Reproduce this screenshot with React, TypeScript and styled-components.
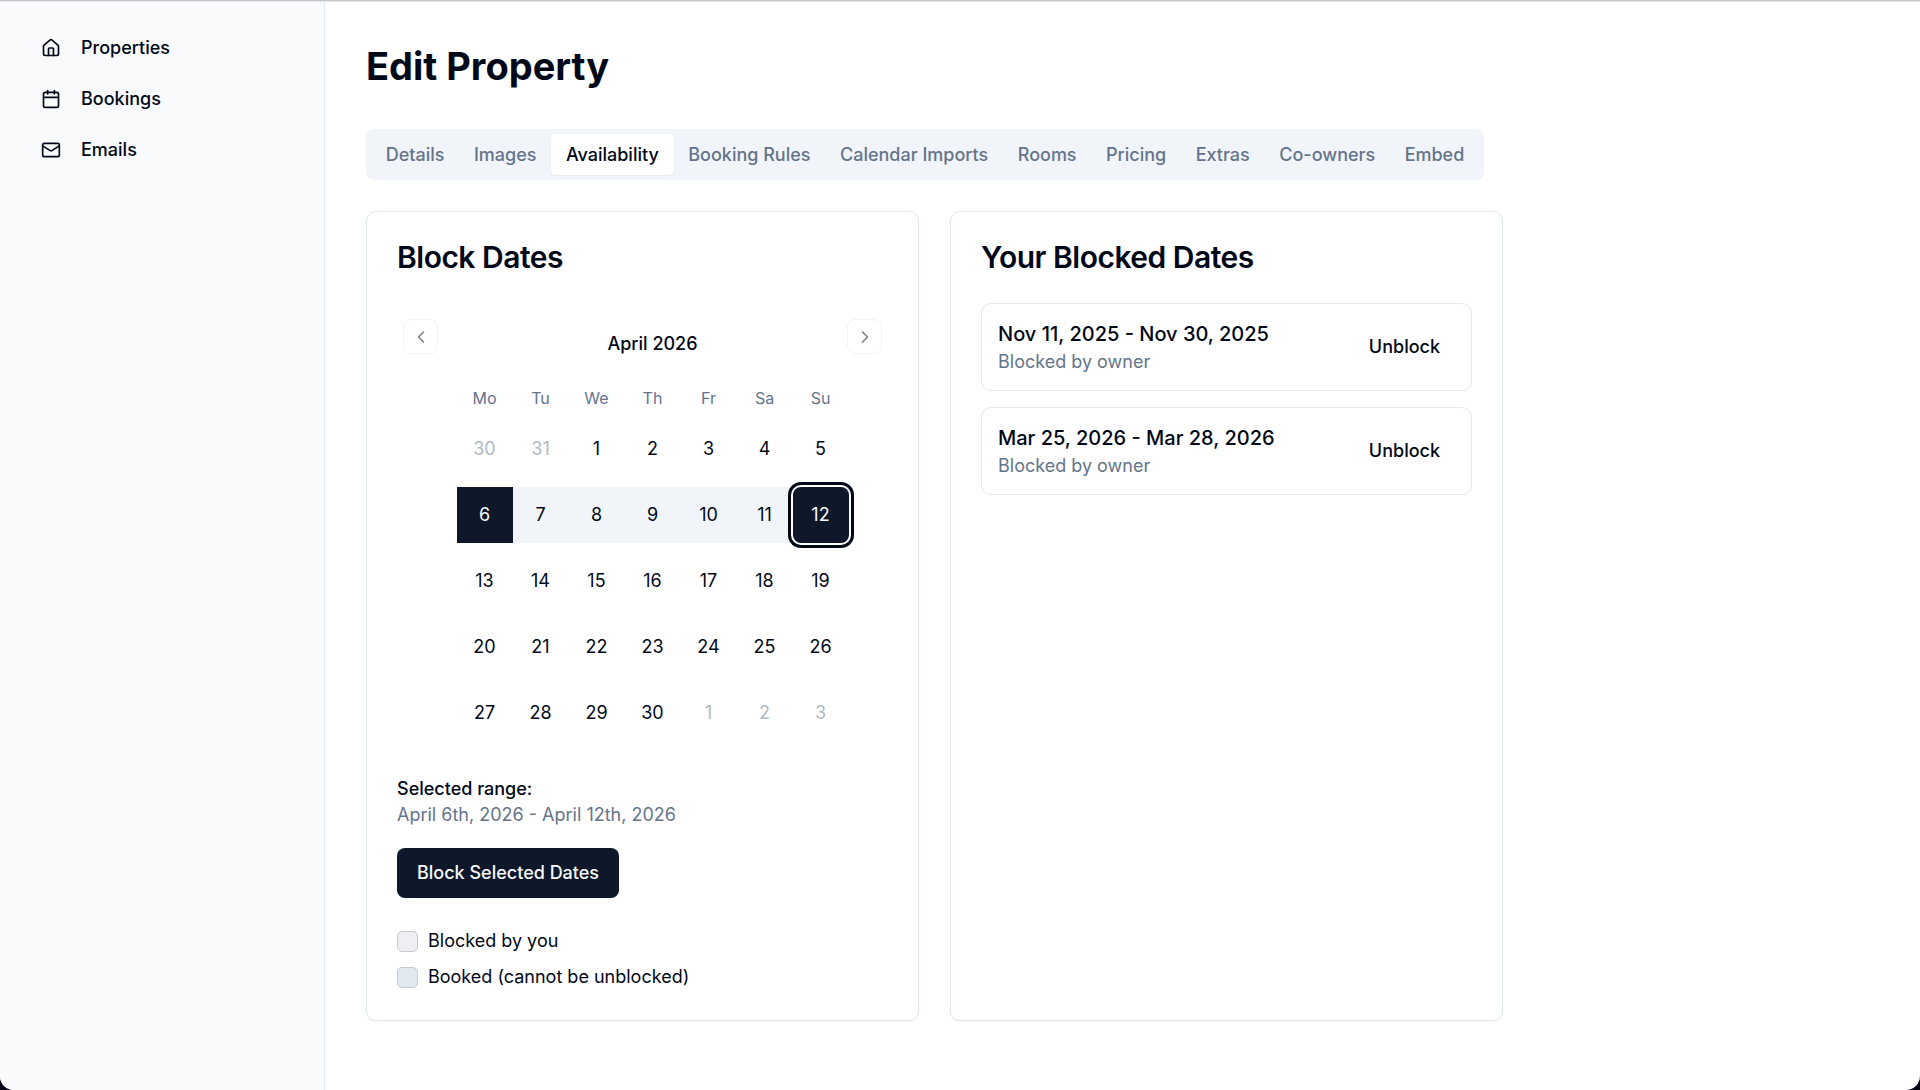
import React from "react";
import styled, { createGlobalStyle } from "styled-components";
import { Calendar, ChevronLeft, ChevronRight, House, Mail } from "lucide-react";

const color = {
  ink: "#020817",
  primary: "#0f172a",
  onPrimary: "#f8fafc",
  muted: "#64748b",
  faint: "#b1b9c5",
  line: "#e2e8f0",
  soft: "#f1f5f9",
  side: "#f8fafc",
};

const GlobalStyle = createGlobalStyle`
  *, *::before, *::after { box-sizing: border-box; }
  body {
    margin: 0;
    border-top: 1px solid #c3c7cc;
    background: #000010;
    color: ${color.ink};
    font-family: Inter, "Liberation Sans", sans-serif;
    font-size: 18px;
    line-height: 26px;
    -webkit-font-smoothing: antialiased;
  }
  button { font: inherit; color: inherit; cursor: pointer; }
  h1, h2, p, ul { margin: 0; padding: 0; }
  ul { list-style: none; }
`;

const Shell = styled.div`
  display: flex;
  min-height: calc(100vh - 1px);
  background: #fff;
  border-top: 1px solid #e4e7eb;
  border-radius: 0 0 14px 14px;
  overflow: hidden;
`;

const Sidebar = styled.aside`
  flex: 0 0 325px;
  padding: 20px;
  background: ${color.side};
  border-right: 1px solid ${color.line};
`;

const NavLink = styled.a`
  display: flex;
  align-items: center;
  gap: 20px;
  height: 51px;
  padding: 0 21px;
  color: inherit;
  font-weight: 500;
  text-decoration: none;
`;

const Main = styled.main`
  flex: 1;
  min-width: 0;
  padding: 41px;
`;

const Content = styled.div`
  max-width: 1137px;
`;

const PageTitle = styled.h1`
  margin-bottom: 40px;
  font-size: 38px;
  line-height: 46px;
  font-weight: 700;
`;

const TabList = styled.div`
  display: flex;
  max-width: 1118px;
  height: 51px;
  margin-bottom: 31px;
  padding: 5px;
  border-radius: 8px;
  background: ${color.soft};
`;

const Tab = styled.button<{ $active: boolean }>`
  flex: 1 1 auto;
  padding: 0 14px;
  border: 0;
  border-radius: 5px;
  font-weight: 500;
  white-space: nowrap;
  color: ${(p) => (p.$active ? color.ink : color.muted)};
  background: ${(p) => (p.$active ? "#fff" : "transparent")};
  box-shadow: ${(p) => (p.$active ? "0 1px 2px rgba(0, 0, 0, 0.06)" : "none")};
`;

const Cards = styled.div`
  display: grid;
  grid-template-columns: 1fr 1fr;
  gap: 31px;
`;

const Card = styled.section`
  padding: 30px;
  border: 1px solid ${color.line};
  border-radius: 10px;
  background: #fff;
  box-shadow: 0 1px 2px rgba(0, 0, 0, 0.05);
`;

const CardTitle = styled.h2`
  margin-bottom: 31px;
  font-size: 30px;
  line-height: 30px;
  font-weight: 600;
  letter-spacing: -0.5px;
`;

const CalendarBox = styled.div`
  padding: 16px 6px;
  margin-bottom: 19px;
`;

const CalendarHeader = styled.div`
  display: flex;
  justify-content: space-between;
  align-items: flex-start;
  margin-bottom: 28px;
`;

const MonthName = styled.div`
  padding: 12px 0 0 20px;
  font-weight: 500;
`;

const MonthButton = styled.button`
  display: flex;
  align-items: center;
  justify-content: center;
  width: 35px;
  height: 35px;
  padding: 0;
  border: 1px solid ${color.line};
  border-radius: 8px;
  background: transparent;
  opacity: 0.5;
`;

const MonthTable = styled.table`
  width: 392px;
  margin: 0 auto;
  border-collapse: collapse;
  table-layout: fixed;
`;

const MonthFrame = styled.div`
  padding-left: 20px;
`;

const Weekday = styled.th`
  padding: 0;
  font-size: 16px;
  font-weight: 400;
  color: ${color.muted};
`;

const DayCell = styled.td`
  padding: 10px 0 0;
`;

type DayKind = "plain" | "outside" | "edge" | "middle" | "focused";

const Day = styled.button<{ $kind: DayKind }>`
  display: block;
  width: 100%;
  height: 56px;
  padding: 0;
  border: 0;
  border-radius: ${(p) => (p.$kind === "focused" ? "8px" : "0")};
  color: ${(p) =>
    p.$kind === "outside"
      ? color.faint
      : p.$kind === "edge" || p.$kind === "focused"
        ? color.onPrimary
        : color.ink};
  background: ${(p) =>
    p.$kind === "edge" || p.$kind === "focused"
      ? color.primary
      : p.$kind === "middle"
        ? color.soft
        : "transparent"};
  box-shadow: ${(p) =>
    p.$kind === "focused" ? `0 0 0 2px #fff, 0 0 0 5px ${color.ink}` : "none"};
`;

const Strong = styled.p`
  font-weight: 500;
`;

const Muted = styled.p`
  color: ${color.muted};
`;

const PrimaryButton = styled.button`
  height: 50px;
  margin: 20px 0 30px;
  padding: 0 20px;
  border: 0;
  border-radius: 8px;
  background: ${color.primary};
  color: ${color.onPrimary};
  font-weight: 500;
`;

const Legend = styled.ul`
  display: grid;
  gap: 10px;
`;

const LegendItem = styled.li`
  display: flex;
  align-items: center;
  gap: 10px;
`;

const Swatch = styled.span<{ $fill: string }>`
  width: 21px;
  height: 21px;
  border: 1px solid #c6cad2;
  border-radius: 5px;
  background: ${(p) => p.$fill};
`;

const BlockedList = styled.ul`
  display: grid;
  gap: 16px;
`;

const BlockedItem = styled.li`
  display: flex;
  align-items: center;
  justify-content: space-between;
  padding: 15px 16px;
  border: 1px solid ${color.line};
  border-radius: 10px;
`;

const BlockedRange = styled.p`
  font-size: 20px;
  line-height: 30px;
  font-weight: 500;
`;

const GhostButton = styled.button`
  height: 46px;
  padding: 0 15px;
  border: 0;
  border-radius: 8px;
  background: transparent;
  font-weight: 500;
`;

const nav = [
  { label: "Properties", Icon: House },
  { label: "Bookings", Icon: Calendar },
  { label: "Emails", Icon: Mail },
];

const tabs = [
  "Details",
  "Images",
  "Availability",
  "Booking Rules",
  "Calendar Imports",
  "Rooms",
  "Pricing",
  "Extras",
  "Co-owners",
  "Embed",
];

const weekdays = ["Mo", "Tu", "We", "Th", "Fr", "Sa", "Su"];

const weeks = [
  [30, 31, 1, 2, 3, 4, 5],
  [6, 7, 8, 9, 10, 11, 12],
  [13, 14, 15, 16, 17, 18, 19],
  [20, 21, 22, 23, 24, 25, 26],
  [27, 28, 29, 30, 1, 2, 3],
];

const blocked = ["Nov 11, 2025 - Nov 30, 2025", "Mar 25, 2026 - Mar 28, 2026"];

function dayKind(week: number, day: number): DayKind {
  if ((week === 0 && day > 7) || (week === 4 && day < 7)) return "outside";
  if (day === 6) return "edge";
  if (day === 12) return "focused";
  return week === 1 ? "middle" : "plain";
}

export default function App() {
  return (
    <>
      <GlobalStyle />
      <Shell>
        <Sidebar>
          <nav>
            {nav.map(({ label, Icon }) => (
              <NavLink href="#" key={label}>
                <Icon size={20} aria-hidden />
                {label}
              </NavLink>
            ))}
          </nav>
        </Sidebar>
        <Main>
          <Content>
            <PageTitle>Edit Property</PageTitle>
            <TabList role="tablist">
              {tabs.map((t) => (
                <Tab
                  key={t}
                  type="button"
                  role="tab"
                  aria-selected={t === "Availability"}
                  $active={t === "Availability"}
                >
                  {t}
                </Tab>
              ))}
            </TabList>
            <Cards>
              <Card>
                <CardTitle>Block Dates</CardTitle>
                <CalendarBox>
                  <CalendarHeader>
                    <MonthButton type="button" aria-label="Previous month">
                      <ChevronLeft size={20} />
                    </MonthButton>
                    <MonthName>April 2026</MonthName>
                    <MonthButton type="button" aria-label="Next month">
                      <ChevronRight size={20} />
                    </MonthButton>
                  </CalendarHeader>
                  <MonthFrame>
                    <MonthTable>
                      <thead>
                        <tr>
                          {weekdays.map((d) => (
                            <Weekday scope="col" key={d}>
                              {d}
                            </Weekday>
                          ))}
                        </tr>
                      </thead>
                      <tbody>
                        {weeks.map((week, w) => (
                          <tr key={w}>
                            {week.map((d) => (
                              <DayCell key={d}>
                                <Day type="button" $kind={dayKind(w, d)}>
                                  {d}
                                </Day>
                              </DayCell>
                            ))}
                          </tr>
                        ))}
                      </tbody>
                    </MonthTable>
                  </MonthFrame>
                </CalendarBox>
                <Strong>Selected range:</Strong>
                <Muted>April 6th, 2026 - April 12th, 2026</Muted>
                <PrimaryButton type="button">Block Selected Dates</PrimaryButton>
                <Legend>
                  <LegendItem>
                    <Swatch $fill="#eeeff3" />
                    Blocked by you
                  </LegendItem>
                  <LegendItem>
                    <Swatch $fill="#e2e8f0" />
                    Booked (cannot be unblocked)
                  </LegendItem>
                </Legend>
              </Card>
              <Card>
                <CardTitle>Your Blocked Dates</CardTitle>
                <BlockedList>
                  {blocked.map((range) => (
                    <BlockedItem key={range}>
                      <div>
                        <BlockedRange>{range}</BlockedRange>
                        <Muted>Blocked by owner</Muted>
                      </div>
                      <GhostButton type="button">Unblock</GhostButton>
                    </BlockedItem>
                  ))}
                </BlockedList>
              </Card>
            </Cards>
          </Content>
        </Main>
      </Shell>
    </>
  );
}
